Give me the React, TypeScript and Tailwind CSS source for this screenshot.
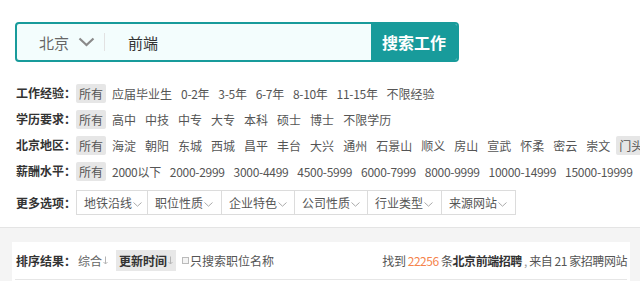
import React from "react";

const Down = () => (
  <svg width="5" height="9" viewBox="0 0 5 9" className="ml-[1px]">
    <path d="M2.5 0.5 V8 M0.5 6 L2.5 8 L4.5 6" stroke="#b5b5b5" strokeWidth="1" fill="none" />
  </svg>
);

const SmallChev = () => (
  <svg width="9" height="5" viewBox="0 0 9 5" className="ml-[1px] mt-[3px]">
    <polyline points="0.5,0.5 4.5,4.2 8.5,0.5" stroke="#aaa" strokeWidth="1" fill="none" />
  </svg>
);

function itemClass(t: string, active: boolean) {
  const digits = /\d/.test(t);
  if (active) return "shrink-0 px-[3px] h-[19px] leading-[19px] text-[12px] text-[#555] bg-[#e6e6e6] rounded-[2px]";
  if (digits) return "shrink-0 px-[3px] h-[19px] leading-[19px] text-[12px] text-[#555] tracking-[-0.3px]";
  return "shrink-0 px-[3px] h-[19px] leading-[19px] text-[12px] text-[#555]";
}

function Row({ label, items, hoverLast }: { label: string; items: string[]; hoverLast?: boolean }) {
  return (
    <div className="flex items-center h-[26px] pl-[16px] whitespace-nowrap">
      <span className="w-[60px] shrink-0 text-[12px] font-bold text-[#333]">{label}</span>
      <div className="flex items-center gap-[3px]">
        {items.map((t, i) => (
          <span key={i} className={itemClass(t, i === 0 || (!!hoverLast && i === items.length - 1))}>
            {t}
          </span>
        ))}
      </div>
    </div>
  );
}

export default function App() {
  const opts = ["地铁沿线", "职位性质", "企业特色", "公司性质", "行业类型", "来源网站"];
  const widths = ["w-[72px] border", "w-[74px] border border-l-0", "w-[73px] border border-l-0", "w-[73px] border border-l-0", "w-[74px] border border-l-0", "w-[74px] border border-l-0"];
  return (
    <div className="w-[640px] h-[281px] overflow-hidden bg-white font-['Noto_Sans_CJK_SC',sans-serif]">
      <div className="pt-[22px] pl-[15px]">
        <div className="w-[444px] h-[40px] flex rounded-[4px] border-2 border-[#189b9b] bg-[#f3fdfd] overflow-hidden">
          <div className="flex-1 flex items-center pl-[22px]">
            <span className="text-[15px] text-[#666] leading-none">北京</span>
            <svg width="17" height="10" viewBox="0 0 17 10" className="ml-[9px]">
              <polyline points="1.5,1.5 8.5,8 15.5,1.5" stroke="#8a8a8a" strokeWidth="2.2" fill="none" />
            </svg>
            <div className="ml-[9px] w-px h-[18px] bg-[#e2e2e2]" />
            <span className="ml-[23px] text-[15px] text-[#333] leading-none">前端</span>
          </div>
          <div className="w-[86px] bg-[#189b9b] flex items-center justify-center text-white text-[16px] font-bold">
            搜索工作
          </div>
        </div>
      </div>

      <div className="mt-[18px]">
        <Row label="工作经验：" items={["所有", "应届毕业生", "0-2年", "3-5年", "6-7年", "8-10年", "11-15年", "不限经验"]} />
        <Row label="学历要求：" items={["所有", "高中", "中技", "中专", "大专", "本科", "硕士", "博士", "不限学历"]} />
        <Row
          label="北京地区："
          hoverLast
          items={["所有", "海淀", "朝阳", "东城", "西城", "昌平", "丰台", "大兴", "通州", "石景山", "顺义", "房山", "宣武", "怀柔", "密云", "崇文", "门头沟"]}
        />
        <Row
          label="薪酬水平："
          items={["所有", "2000以下", "2000-2999", "3000-4499", "4500-5999", "6000-7999", "8000-9999", "10000-14999", "15000-19999"]}
        />
      </div>

      <div className="mt-[6px] flex items-center pl-[16px] h-[25px]">
        <span className="w-[60px] shrink-0 text-[12px] font-bold text-[#333]">更多选项：</span>
        <div className="flex h-[25px]">
          {opts.map((o, i) => (
            <div
              key={o}
              className={`${widths[i]} h-[25px] flex items-center pl-[7px] border-[#dcdcdc] text-[12px] text-[#555]`}
            >
              {o}
              <SmallChev />
            </div>
          ))}
        </div>
      </div>

      <div className="mt-[12px] border-t border-[#e4e4e4] bg-[#f4f4f4] pt-[14px] pl-[12px] pr-[10px] h-[60px]">
        <div className="bg-white px-[3px] h-[45px]">
          <div className="flex items-center h-[38px] border-b border-[#e6e6e6] pl-[1px] whitespace-nowrap">
            <span className="w-[62px] shrink-0 text-[12px] font-bold text-[#333]">排序结果：</span>
            <span className="flex items-center text-[12px] text-[#666]">
              综合
              <Down />
            </span>
            <span className="ml-[8px] flex items-center h-[21px] px-[3px] bg-[#e8e8e8] text-[12px] font-bold text-[#333]">
              更新时间
              <Down />
            </span>
            <span className="ml-[6px] w-[7px] h-[7px] border border-[#bbb] bg-[#f4f4f4]" />
            <span className="ml-[1px] text-[12px] text-[#555]">只搜索职位名称</span>
            <span className="ml-auto text-[12px] text-[#555] tracking-[-0.45px]">
              找到 <span className="text-[#f5844c]">22256</span> 条<span className="font-bold text-[#333]">北京前端招聘</span>
              <span className="text-[#999]"> ,</span> 来自 21 家招聘网站
            </span>
          </div>
        </div>
      </div>
    </div>
  );
}
